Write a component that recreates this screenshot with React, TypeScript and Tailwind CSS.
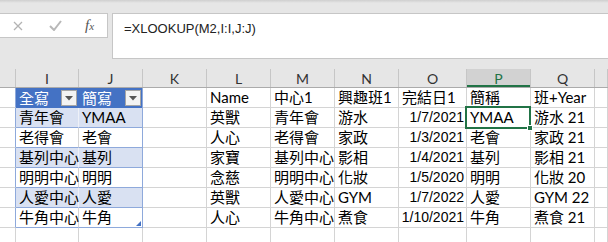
import React from 'react'

const font = { fontFamily: 'Lato, "Noto Sans CJK TC", sans-serif' }
const numFont = { fontFamily: '"Liberation Sans", "Noto Sans CJK TC", sans-serif' }

// column widths: partial H, I..Q, partial R
const cols = [
  { key: 'H', w: 16 },
  { key: 'I', w: 63 },
  { key: 'J', w: 64 },
  { key: 'K', w: 64 },
  { key: 'L', w: 64 },
  { key: 'M', w: 64 },
  { key: 'N', w: 64 },
  { key: 'O', w: 68 },
  { key: 'P', w: 64 },
  { key: 'Q', w: 64 },
  { key: 'R', w: 13 },
]

const header = ['', '全寫', '簡寫', '', 'Name', '中心1', '興趣班1', '完結日1', '簡稱', '班+Year', '']

const rows = [
  ['', '青年會', 'YMAA', '', '英獸', '青年會', '游水', '1/7/2021', 'YMAA', '游水 21', ''],
  ['', '老得會', '老會', '', '人心', '老得會', '家政', '1/3/2021', '老會', '家政 21', ''],
  ['', '基列中心', '基列', '', '家寶', '基列中心', '影相', '1/4/2021', '基列', '影相 21', ''],
  ['', '明明中心', '明明', '', '念慈', '明明中心', '化妝', '1/5/2020', '明明', '化妝 20', ''],
  ['', '人愛中心', '人愛', '', '英獸', '人愛中心', 'GYM', '1/7/2022', '人愛', 'GYM 22', ''],
  ['', '牛角中心', '牛角', '', '人心', '牛角中心', '煮食', '1/10/2021', '牛角', '煮食 21', ''],
  ['', '', '', '', '', '', '', '', '', '', ''],
]

function Dropdown() {
  return (
    <span className="ml-auto mr-[1px] flex h-[16px] w-[16px] items-center justify-center border border-[#a6a6a6] bg-[#f3f3f3]">
      <svg width="8" height="5" viewBox="0 0 8 5">
        <path d="M0 0h8L4 4.5z" fill="#555" />
      </svg>
    </span>
  )
}

function FormulaBar() {
  return (
    <div className="h-[69px] bg-[#e6e6e6]">
      <div className="h-[3px] bg-gradient-to-b from-[#cfcfcf] to-[#e6e6e6]" />
      <div className="flex gap-[4px] pt-[10px]">
        <div className="flex h-[25px] w-[108px] items-center border border-l-0 border-[#c6c6c6] bg-white">
          <svg className="ml-[13px]" width="10" height="10" viewBox="0 0 10 10">
            <path d="M1 1l8 8M9 1l-8 8" stroke="#b3b3b3" strokeWidth="1.3" />
          </svg>
          <svg className="ml-[26px]" width="13" height="11" viewBox="0 0 13 11">
            <path d="M1 6l4 4 7-9" fill="none" stroke="#b8b8b8" strokeWidth="2" />
          </svg>
          <span
            className="ml-[23px] text-[15px] italic leading-none text-[#555]"
            style={{ fontFamily: '"Liberation Serif", serif' }}
          >
            f<span className="text-[11px]">x</span>
          </span>
        </div>
        <div
          className="h-[46px] flex-1 border border-r-0 border-[#c6c6c6] bg-white pl-[11px] pt-[5px] text-[13px] text-[#222]"
          style={numFont}
        >
          =XLOOKUP(M2,I:I,J:J)
        </div>
      </div>
    </div>
  )
}

function ColumnHeaders() {
  return (
    <div className="flex h-[19px] border-b border-[#ababab] bg-[#e6e6e6]">
      {cols.map((c, i) => {
        const active = c.key === 'P'
        return (
          <div
            key={c.key}
            style={{ width: c.w }}
            className={`flex shrink-0 items-center justify-center border-r text-[14px] ${
              active
                ? 'border-[#c6c6c6] bg-[#d2d2d2] text-[#217346] shadow-[inset_0_-2px_0_#217346]'
                : 'border-[#c6c6c6] text-[#333]'
            }`}
          >
            {i === 0 || c.key === 'R' ? '' : c.key}
          </div>
        )
      })}
    </div>
  )
}

function HeaderRow() {
  return (
    <div className="flex h-[20px]">
      {cols.map((c, i) => {
        const inTable = i === 1 || i === 2
        let cls = 'border-b border-r border-[#d4d4d4]'
        if (i === 0) cls = 'border-b border-r border-b-[#d4d4d4] border-r-[#8ea9db]'
        if (i === 1) cls = 'border-r border-[#4472c4] bg-[#4472c4] text-white'
        if (i === 2) cls = 'border-r border-[#8ea9db] bg-[#4472c4] text-white'
        return (
          <div
            key={c.key}
            style={{ width: c.w }}
            className={`flex shrink-0 items-center overflow-visible whitespace-nowrap pl-[3px] text-[15px] ${cls}`}
          >
            {header[i]}
            {inTable && <Dropdown />}
          </div>
        )
      })}
    </div>
  )
}

function DataRow({ cells, index }: { cells: string[]; index: number }) {
  const inTable = index < 6
  const banded = inTable && index % 2 === 0
  return (
    <div className="flex h-[20px]">
      {cols.map((c, i) => {
        let cls = 'border-b border-r border-[#d4d4d4]'
        if (inTable && i === 0) cls = 'border-b border-r border-b-[#d4d4d4] border-r-[#8ea9db]'
        if (inTable && i === 1)
          cls = banded
            ? 'border-b border-r border-b-[#8ea9db] border-r-[#eef1f8] bg-[#d9e1f2]'
            : 'border-b border-r border-b-[#8ea9db] border-r-[#d4d4d4]'
        if (inTable && i === 2)
          cls = `border-b border-r border-[#8ea9db] ${banded ? 'bg-[#d9e1f2]' : ''}`
        const isDate = c.key === 'O'
        const selected = index === 0 && c.key === 'P'
        const lastTableCell = index === 5 && i === 2
        return (
          <div
            key={c.key}
            style={{ width: c.w }}
            className={`relative flex shrink-0 items-center whitespace-nowrap text-[15px] text-black ${
              isDate ? 'justify-end pr-[2px]' : 'pl-[3px]'
            } ${cls}`}
          >
            {isDate ? (
              <span className="text-[14px]" style={numFont}>
                {cells[i]}
              </span>
            ) : (
              cells[i]
            )}
            {selected && (
              <div className="absolute -left-[2px] -top-[2px] z-10 h-[23px] w-[66px] border-2 border-[#217346]">
                <div className="absolute -bottom-[4px] -right-[4px] h-[6px] w-[6px] border border-white bg-[#217346]" />
              </div>
            )}
            {lastTableCell && (
              <svg className="absolute bottom-[1px] right-[1px]" width="5" height="5" viewBox="0 0 5 5">
                <path d="M5 0v5H0z" fill="#4472c4" />
              </svg>
            )}
          </div>
        )
      })}
    </div>
  )
}

export default function App() {
  return (
    <div className="h-[242px] w-[608px] overflow-hidden bg-white" style={font}>
      <FormulaBar />
      <ColumnHeaders />
      <HeaderRow />
      {rows.map((r, i) => (
        <DataRow key={i} cells={r} index={i} />
      ))}
    </div>
  )
}
